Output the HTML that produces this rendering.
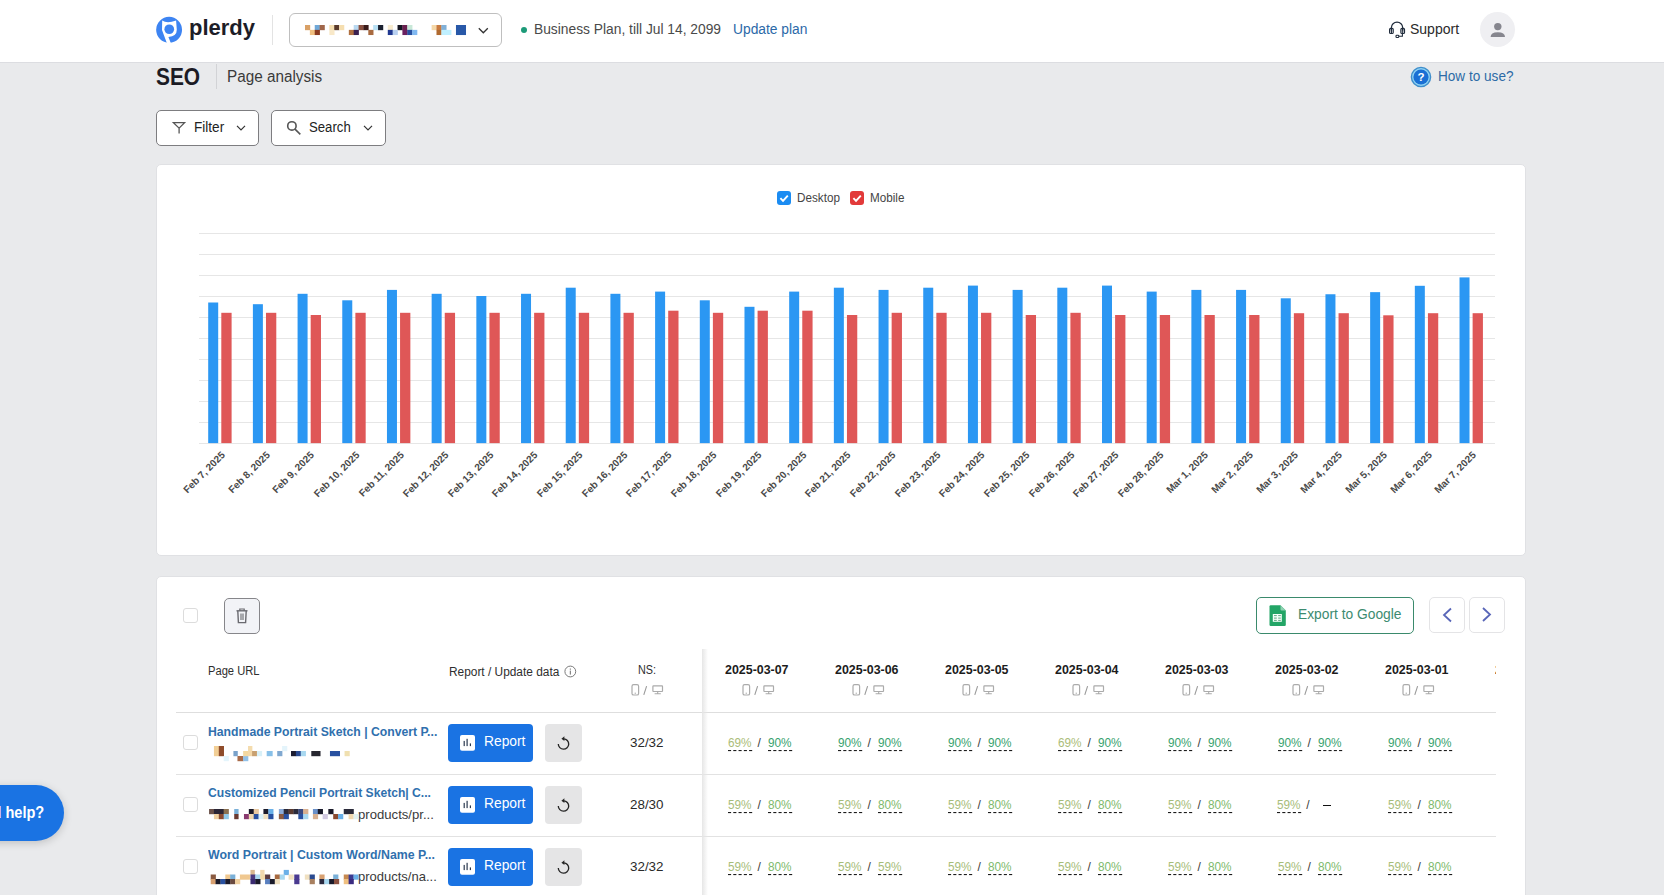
<!DOCTYPE html>
<html><head><meta charset="utf-8"><title>SEO - Page analysis</title>
<style>
html,body{margin:0;padding:0;}
body{width:1664px;height:895px;overflow:hidden;position:relative;background:#e9eaec;font-family:'Liberation Sans', sans-serif;}
.t{position:absolute;white-space:nowrap;}
svg{overflow:visible;}
</style></head><body>
<div style="position:absolute;left:0px;top:0px;width:1664px;height:62px;background:#fff;border-bottom:1px solid #dcdde1;"></div>
<svg style="position:absolute;left:156px;top:17px;" width="26" height="26" viewBox="0 0 26 26"><circle cx="13.1" cy="12.8" r="12.95" fill="#3d84f2"/><path d="M6.2,3.5 Q11,6.8 20.1,3.5 L20.8,12.8 Q20.8,19.5 12.4,20.1 L15.2,27 L11.2,27 L6,13.1 Z" fill="#fff"/><circle cx="13.25" cy="12.25" r="4.85" fill="#3d84f2"/></svg>
<div class="t " style="left:189px;top:17px;font-size:22px;line-height:22px;font-weight:700;color:#1d1d27;">plerdy</div>
<div style="position:absolute;left:272px;top:15px;width:1px;height:30px;background:#e3e3e3;"></div>
<div style="position:absolute;left:289px;top:13px;width:213px;height:34px;box-sizing:border-box;border:1px solid #bfbfbf;border-radius:6px;background:#fff;"></div>
<svg style="position:absolute;left:305px;top:25px;" width="165" height="10" viewBox="0 0 165 10"><rect x="0.00" y="0.00" width="5.17" height="5.17" fill="#d9a066"/><rect x="9.74" y="0.00" width="5.17" height="5.17" fill="#6fa8d8"/><rect x="14.61" y="0.00" width="5.17" height="5.17" fill="#a0664a"/><rect x="24.35" y="0.00" width="5.17" height="5.17" fill="#f5deb0"/><rect x="29.22" y="0.00" width="5.17" height="5.17" fill="#5a3a2a"/><rect x="34.09" y="0.00" width="5.17" height="5.17" fill="#f5deb0"/><rect x="48.70" y="0.00" width="5.17" height="5.17" fill="#b8d8f0"/><rect x="53.57" y="0.00" width="5.17" height="5.17" fill="#8a5040"/><rect x="58.44" y="0.00" width="5.17" height="5.17" fill="#3a1a1a"/><rect x="68.18" y="0.00" width="5.17" height="5.17" fill="#b8e0f4"/><rect x="73.05" y="0.00" width="5.17" height="5.17" fill="#1a2030"/><rect x="82.79" y="0.00" width="5.17" height="5.17" fill="#f8ecd0"/><rect x="92.53" y="0.00" width="5.17" height="5.17" fill="#151522"/><rect x="97.40" y="0.00" width="5.17" height="5.17" fill="#6a2050"/><rect x="102.27" y="0.00" width="5.17" height="5.17" fill="#c8e8d8"/><rect x="126.62" y="0.00" width="5.17" height="5.17" fill="#f5d8a8"/><rect x="131.49" y="0.00" width="5.17" height="5.17" fill="#c87a40"/><rect x="136.36" y="0.00" width="5.17" height="5.17" fill="#80b0d8"/><rect x="150.97" y="0.00" width="10.04" height="10.04" fill="#2858a8"/><rect x="4.87" y="4.87" width="5.17" height="5.17" fill="#f0c080"/><rect x="9.74" y="4.87" width="5.17" height="5.17" fill="#8a3a20"/><rect x="24.35" y="4.87" width="5.17" height="5.17" fill="#f8e8c8"/><rect x="43.83" y="4.87" width="5.17" height="5.17" fill="#b07040"/><rect x="48.70" y="4.87" width="5.17" height="5.17" fill="#3a2050"/><rect x="63.31" y="4.87" width="5.17" height="5.17" fill="#a86a40"/><rect x="82.79" y="4.87" width="5.17" height="5.17" fill="#203890"/><rect x="87.66" y="4.87" width="5.17" height="5.17" fill="#b8d0f0"/><rect x="97.40" y="4.87" width="5.17" height="5.17" fill="#6a2060"/><rect x="102.27" y="4.87" width="5.17" height="5.17" fill="#2850a0"/><rect x="107.14" y="4.87" width="5.17" height="5.17" fill="#80b8f0"/><rect x="131.49" y="4.87" width="5.17" height="5.17" fill="#b06a30"/><rect x="136.36" y="4.87" width="10.04" height="5.17" fill="#c0f0ff"/></svg>
<svg style="position:absolute;left:477px;top:26px;" width="13" height="9" viewBox="0 0 13 9"><polyline points="1.8,2.2 6.3,6.8 10.8,2.2" fill="none" stroke="#333" stroke-width="1.3"/></svg>
<div style="position:absolute;left:521px;top:27px;width:6px;height:6px;border-radius:50%;background:#1c9a78;"></div>
<div class="t " style="left:534px;top:22px;font-size:14px;line-height:14px;font-weight:400;color:#4a4a4a;transform:scaleX(0.9850);transform-origin:left top;">Business Plan, till Jul 14, 2099</div>
<div class="t " style="left:733px;top:22px;font-size:14px;line-height:14px;font-weight:400;color:#2b69a8;transform:scaleX(0.9850);transform-origin:left top;">Update plan</div>
<svg style="position:absolute;left:1388px;top:21px;" width="18" height="18" viewBox="0 0 18 18"><path d="M3.4,9.5 V6.8 A5.65,5.65 0 0 1 14.7,6.8 V9.5" fill="none" stroke="#1f2b3b" stroke-width="1.25"/><rect x="1.6" y="7.3" width="3.6" height="5.2" rx="1.1" fill="none" stroke="#1f2b3b" stroke-width="1.2"/><rect x="12.9" y="7.3" width="3.6" height="5.2" rx="1.1" fill="none" stroke="#1f2b3b" stroke-width="1.2"/><path d="M3.4,7.5 V12.5 M14.7,7.5 V12.5" stroke="#1f2b3b" stroke-width="1.1"/><path d="M14.4,12.6 V15.2 H10.8" fill="none" stroke="#1f2b3b" stroke-width="1.1"/><rect x="8" y="14.3" width="2.8" height="2.2" rx="0.8" fill="none" stroke="#1f2b3b" stroke-width="1.1"/></svg>
<div class="t " style="left:1410px;top:22px;font-size:14px;line-height:14px;font-weight:400;color:#2a2a2a;">Support</div>
<div style="position:absolute;left:1480px;top:12px;width:35px;height:35px;border-radius:50%;background:#efeff2;"></div>
<svg style="position:absolute;left:1480px;top:12px;" width="35" height="35" viewBox="0 0 35 35"><circle cx="17.8" cy="14.6" r="3.7" fill="#86868e"/><path d="M10.6,25 Q10.6,20.2 17.8,20.2 Q25,20.2 25,25 Z" fill="#86868e"/></svg>
<div class="t " style="left:156px;top:65px;font-size:24px;line-height:24px;font-weight:700;color:#1b1b24;transform:scaleX(0.8700);transform-origin:left top;">SEO</div>
<div style="position:absolute;left:216px;top:64px;width:1px;height:25px;background:#d2d3d6;"></div>
<div class="t " style="left:227px;top:69px;font-size:16px;line-height:16px;font-weight:400;color:#3a3a3a;transform:scaleX(0.9550);transform-origin:left top;">Page analysis</div>
<svg style="position:absolute;left:1410px;top:66px;" width="22" height="22" viewBox="0 0 22 22"><circle cx="11" cy="11" r="9.6" fill="#8fd3f4" stroke="#3f8ecb" stroke-width="1.4"/><circle cx="11" cy="11" r="7.6" fill="#1a6fd4"/><text x="11" y="15.2" text-anchor="middle" font-family="Liberation Sans" font-weight="700" font-size="11.5" fill="#fff">?</text></svg>
<div class="t " style="left:1438px;top:69px;font-size:14px;line-height:14px;font-weight:400;color:#2d6aa6;transform:scaleX(0.9700);transform-origin:left top;">How to use?</div>
<div style="position:absolute;left:156px;top:110px;width:103px;height:36px;box-sizing:border-box;border:1px solid #7d7d80;border-radius:5px;background:#fff;"></div>
<svg style="position:absolute;left:172px;top:120px;" width="14" height="15" viewBox="0 0 14 15"><path d="M1.4,2.6 H12.6 L7.1,8.2 Z M7.1,8 V13.6" fill="none" stroke="#555" stroke-width="1.3" stroke-linejoin="miter"/></svg>
<div class="t " style="left:194px;top:120px;font-size:14px;line-height:14px;font-weight:400;color:#222;transform:scaleX(0.9700);transform-origin:left top;">Filter</div>
<svg style="position:absolute;left:235px;top:124px;" width="12" height="8" viewBox="0 0 12 8"><polyline points="2,1.8 6,5.8 10,1.8" fill="none" stroke="#333" stroke-width="1.2"/></svg>
<div style="position:absolute;left:271px;top:110px;width:115px;height:36px;box-sizing:border-box;border:1px solid #7d7d80;border-radius:5px;background:#fff;"></div>
<svg style="position:absolute;left:285px;top:120px;" width="17" height="16" viewBox="0 0 17 16"><circle cx="6.9" cy="5.9" r="4.2" fill="none" stroke="#555" stroke-width="1.6"/><line x1="10" y1="9.2" x2="15.3" y2="14.3" stroke="#555" stroke-width="1.6"/></svg>
<div class="t " style="left:309px;top:120px;font-size:14px;line-height:14px;font-weight:400;color:#222;transform:scaleX(0.9400);transform-origin:left top;">Search</div>
<svg style="position:absolute;left:362px;top:124px;" width="12" height="8" viewBox="0 0 12 8"><polyline points="2,1.8 6,5.8 10,1.8" fill="none" stroke="#333" stroke-width="1.2"/></svg>
<div style="position:absolute;left:156px;top:164px;width:1370px;height:392px;box-sizing:border-box;border:1px solid #e0e1e4;border-radius:5px;background:#fff;"></div>
<div style="position:absolute;left:777px;top:191px;width:14px;height:14px;border-radius:3px;background:#1b8cf2;"></div>
<svg style="position:absolute;left:777px;top:191px;" width="14" height="14" viewBox="0 0 14 14"><polyline points="3.4,7.2 6,9.8 10.8,4.6" fill="none" stroke="#fff" stroke-width="1.9"/></svg>
<div class="t " style="left:797px;top:192px;font-size:12px;line-height:12px;font-weight:400;color:#444;transform:scaleX(0.9750);transform-origin:left top;">Desktop</div>
<div style="position:absolute;left:850px;top:191px;width:14px;height:14px;border-radius:3px;background:#e23a3a;"></div>
<svg style="position:absolute;left:850px;top:191px;" width="14" height="14" viewBox="0 0 14 14"><polyline points="3.4,7.2 6,9.8 10.8,4.6" fill="none" stroke="#fff" stroke-width="1.9"/></svg>
<div class="t " style="left:870px;top:192px;font-size:12px;line-height:12px;font-weight:400;color:#444;transform:scaleX(0.9750);transform-origin:left top;">Mobile</div>
<svg style="position:absolute;left:156px;top:164px;" width="1370" height="392" viewBox="0 0 1370 392"><rect x="43" y="69" width="1296" height="1" fill="#e6e6e6"/><rect x="43" y="90" width="1296" height="1" fill="#e6e6e6"/><rect x="43" y="111" width="1296" height="1" fill="#e6e6e6"/><rect x="43" y="132" width="1296" height="1" fill="#e6e6e6"/><rect x="43" y="153" width="1296" height="1" fill="#e6e6e6"/><rect x="43" y="174" width="1296" height="1" fill="#e6e6e6"/><rect x="43" y="195" width="1296" height="1" fill="#e6e6e6"/><rect x="43" y="216" width="1296" height="1" fill="#e6e6e6"/><rect x="43" y="237" width="1296" height="1" fill="#e6e6e6"/><rect x="43" y="258" width="1296" height="1" fill="#e6e6e6"/><rect x="43" y="279" width="1296" height="1" fill="#e6e6e6"/><rect x="52.20" y="138.50" width="10" height="140.60" fill="#2b97f3"/><rect x="65.30" y="148.80" width="10.3" height="130.30" fill="#df5757"/><rect x="96.89" y="140.20" width="10" height="138.90" fill="#2b97f3"/><rect x="109.99" y="148.80" width="10.3" height="130.30" fill="#df5757"/><rect x="141.58" y="129.80" width="10" height="149.30" fill="#2b97f3"/><rect x="154.68" y="151.00" width="10.3" height="128.10" fill="#df5757"/><rect x="186.27" y="136.30" width="10" height="142.80" fill="#2b97f3"/><rect x="199.37" y="148.80" width="10.3" height="130.30" fill="#df5757"/><rect x="230.96" y="125.90" width="10" height="153.20" fill="#2b97f3"/><rect x="244.06" y="148.80" width="10.3" height="130.30" fill="#df5757"/><rect x="275.65" y="129.80" width="10" height="149.30" fill="#2b97f3"/><rect x="288.75" y="148.80" width="10.3" height="130.30" fill="#df5757"/><rect x="320.34" y="132.00" width="10" height="147.10" fill="#2b97f3"/><rect x="333.44" y="148.80" width="10.3" height="130.30" fill="#df5757"/><rect x="365.03" y="129.80" width="10" height="149.30" fill="#2b97f3"/><rect x="378.13" y="148.80" width="10.3" height="130.30" fill="#df5757"/><rect x="409.72" y="123.70" width="10" height="155.40" fill="#2b97f3"/><rect x="422.82" y="148.80" width="10.3" height="130.30" fill="#df5757"/><rect x="454.41" y="129.80" width="10" height="149.30" fill="#2b97f3"/><rect x="467.51" y="148.80" width="10.3" height="130.30" fill="#df5757"/><rect x="499.10" y="127.60" width="10" height="151.50" fill="#2b97f3"/><rect x="512.20" y="146.70" width="10.3" height="132.40" fill="#df5757"/><rect x="543.79" y="136.30" width="10" height="142.80" fill="#2b97f3"/><rect x="556.89" y="148.80" width="10.3" height="130.30" fill="#df5757"/><rect x="588.48" y="142.80" width="10" height="136.30" fill="#2b97f3"/><rect x="601.58" y="146.70" width="10.3" height="132.40" fill="#df5757"/><rect x="633.17" y="127.60" width="10" height="151.50" fill="#2b97f3"/><rect x="646.27" y="146.70" width="10.3" height="132.40" fill="#df5757"/><rect x="677.86" y="123.70" width="10" height="155.40" fill="#2b97f3"/><rect x="690.96" y="151.00" width="10.3" height="128.10" fill="#df5757"/><rect x="722.55" y="125.90" width="10" height="153.20" fill="#2b97f3"/><rect x="735.65" y="148.80" width="10.3" height="130.30" fill="#df5757"/><rect x="767.24" y="123.70" width="10" height="155.40" fill="#2b97f3"/><rect x="780.34" y="148.80" width="10.3" height="130.30" fill="#df5757"/><rect x="811.93" y="121.60" width="10" height="157.50" fill="#2b97f3"/><rect x="825.03" y="148.80" width="10.3" height="130.30" fill="#df5757"/><rect x="856.62" y="125.90" width="10" height="153.20" fill="#2b97f3"/><rect x="869.72" y="151.00" width="10.3" height="128.10" fill="#df5757"/><rect x="901.31" y="123.70" width="10" height="155.40" fill="#2b97f3"/><rect x="914.41" y="148.80" width="10.3" height="130.30" fill="#df5757"/><rect x="946.00" y="121.60" width="10" height="157.50" fill="#2b97f3"/><rect x="959.10" y="151.00" width="10.3" height="128.10" fill="#df5757"/><rect x="990.69" y="127.60" width="10" height="151.50" fill="#2b97f3"/><rect x="1003.79" y="151.00" width="10.3" height="128.10" fill="#df5757"/><rect x="1035.38" y="125.90" width="10" height="153.20" fill="#2b97f3"/><rect x="1048.48" y="151.00" width="10.3" height="128.10" fill="#df5757"/><rect x="1080.07" y="125.90" width="10" height="153.20" fill="#2b97f3"/><rect x="1093.17" y="151.00" width="10.3" height="128.10" fill="#df5757"/><rect x="1124.76" y="134.30" width="10" height="144.80" fill="#2b97f3"/><rect x="1137.86" y="149.20" width="10.3" height="129.90" fill="#df5757"/><rect x="1169.45" y="130.25" width="10" height="148.85" fill="#2b97f3"/><rect x="1182.55" y="149.20" width="10.3" height="129.90" fill="#df5757"/><rect x="1214.14" y="128.15" width="10" height="150.95" fill="#2b97f3"/><rect x="1227.24" y="151.30" width="10.3" height="127.80" fill="#df5757"/><rect x="1258.83" y="121.80" width="10" height="157.30" fill="#2b97f3"/><rect x="1271.93" y="149.20" width="10.3" height="129.90" fill="#df5757"/><rect x="1303.52" y="113.40" width="10" height="165.70" fill="#2b97f3"/><rect x="1316.62" y="149.20" width="10.3" height="129.90" fill="#df5757"/></svg>
<div class="t" style="right:1444.00px;top:450px;font-size:10px;line-height:10px;font-weight:700;color:#4a4a4a;transform:rotate(-45deg);transform-origin:right top;">Feb 7, 2025</div>
<div class="t" style="right:1399.31px;top:450px;font-size:10px;line-height:10px;font-weight:700;color:#4a4a4a;transform:rotate(-45deg);transform-origin:right top;">Feb 8, 2025</div>
<div class="t" style="right:1354.62px;top:450px;font-size:10px;line-height:10px;font-weight:700;color:#4a4a4a;transform:rotate(-45deg);transform-origin:right top;">Feb 9, 2025</div>
<div class="t" style="right:1309.93px;top:450px;font-size:10px;line-height:10px;font-weight:700;color:#4a4a4a;transform:rotate(-45deg);transform-origin:right top;">Feb 10, 2025</div>
<div class="t" style="right:1265.24px;top:450px;font-size:10px;line-height:10px;font-weight:700;color:#4a4a4a;transform:rotate(-45deg);transform-origin:right top;">Feb 11, 2025</div>
<div class="t" style="right:1220.55px;top:450px;font-size:10px;line-height:10px;font-weight:700;color:#4a4a4a;transform:rotate(-45deg);transform-origin:right top;">Feb 12, 2025</div>
<div class="t" style="right:1175.86px;top:450px;font-size:10px;line-height:10px;font-weight:700;color:#4a4a4a;transform:rotate(-45deg);transform-origin:right top;">Feb 13, 2025</div>
<div class="t" style="right:1131.17px;top:450px;font-size:10px;line-height:10px;font-weight:700;color:#4a4a4a;transform:rotate(-45deg);transform-origin:right top;">Feb 14, 2025</div>
<div class="t" style="right:1086.48px;top:450px;font-size:10px;line-height:10px;font-weight:700;color:#4a4a4a;transform:rotate(-45deg);transform-origin:right top;">Feb 15, 2025</div>
<div class="t" style="right:1041.79px;top:450px;font-size:10px;line-height:10px;font-weight:700;color:#4a4a4a;transform:rotate(-45deg);transform-origin:right top;">Feb 16, 2025</div>
<div class="t" style="right:997.10px;top:450px;font-size:10px;line-height:10px;font-weight:700;color:#4a4a4a;transform:rotate(-45deg);transform-origin:right top;">Feb 17, 2025</div>
<div class="t" style="right:952.41px;top:450px;font-size:10px;line-height:10px;font-weight:700;color:#4a4a4a;transform:rotate(-45deg);transform-origin:right top;">Feb 18, 2025</div>
<div class="t" style="right:907.72px;top:450px;font-size:10px;line-height:10px;font-weight:700;color:#4a4a4a;transform:rotate(-45deg);transform-origin:right top;">Feb 19, 2025</div>
<div class="t" style="right:863.03px;top:450px;font-size:10px;line-height:10px;font-weight:700;color:#4a4a4a;transform:rotate(-45deg);transform-origin:right top;">Feb 20, 2025</div>
<div class="t" style="right:818.34px;top:450px;font-size:10px;line-height:10px;font-weight:700;color:#4a4a4a;transform:rotate(-45deg);transform-origin:right top;">Feb 21, 2025</div>
<div class="t" style="right:773.65px;top:450px;font-size:10px;line-height:10px;font-weight:700;color:#4a4a4a;transform:rotate(-45deg);transform-origin:right top;">Feb 22, 2025</div>
<div class="t" style="right:728.96px;top:450px;font-size:10px;line-height:10px;font-weight:700;color:#4a4a4a;transform:rotate(-45deg);transform-origin:right top;">Feb 23, 2025</div>
<div class="t" style="right:684.27px;top:450px;font-size:10px;line-height:10px;font-weight:700;color:#4a4a4a;transform:rotate(-45deg);transform-origin:right top;">Feb 24, 2025</div>
<div class="t" style="right:639.58px;top:450px;font-size:10px;line-height:10px;font-weight:700;color:#4a4a4a;transform:rotate(-45deg);transform-origin:right top;">Feb 25, 2025</div>
<div class="t" style="right:594.89px;top:450px;font-size:10px;line-height:10px;font-weight:700;color:#4a4a4a;transform:rotate(-45deg);transform-origin:right top;">Feb 26, 2025</div>
<div class="t" style="right:550.20px;top:450px;font-size:10px;line-height:10px;font-weight:700;color:#4a4a4a;transform:rotate(-45deg);transform-origin:right top;">Feb 27, 2025</div>
<div class="t" style="right:505.51px;top:450px;font-size:10px;line-height:10px;font-weight:700;color:#4a4a4a;transform:rotate(-45deg);transform-origin:right top;">Feb 28, 2025</div>
<div class="t" style="right:460.82px;top:450px;font-size:10px;line-height:10px;font-weight:700;color:#4a4a4a;transform:rotate(-45deg);transform-origin:right top;">Mar 1, 2025</div>
<div class="t" style="right:416.13px;top:450px;font-size:10px;line-height:10px;font-weight:700;color:#4a4a4a;transform:rotate(-45deg);transform-origin:right top;">Mar 2, 2025</div>
<div class="t" style="right:371.44px;top:450px;font-size:10px;line-height:10px;font-weight:700;color:#4a4a4a;transform:rotate(-45deg);transform-origin:right top;">Mar 3, 2025</div>
<div class="t" style="right:326.75px;top:450px;font-size:10px;line-height:10px;font-weight:700;color:#4a4a4a;transform:rotate(-45deg);transform-origin:right top;">Mar 4, 2025</div>
<div class="t" style="right:282.06px;top:450px;font-size:10px;line-height:10px;font-weight:700;color:#4a4a4a;transform:rotate(-45deg);transform-origin:right top;">Mar 5, 2025</div>
<div class="t" style="right:237.37px;top:450px;font-size:10px;line-height:10px;font-weight:700;color:#4a4a4a;transform:rotate(-45deg);transform-origin:right top;">Mar 6, 2025</div>
<div class="t" style="right:192.68px;top:450px;font-size:10px;line-height:10px;font-weight:700;color:#4a4a4a;transform:rotate(-45deg);transform-origin:right top;">Mar 7, 2025</div>
<div style="position:absolute;left:156px;top:576px;width:1370px;height:340px;box-sizing:border-box;border:1px solid #e0e1e4;border-radius:5px;background:#fff;"></div>
<div style="position:absolute;left:183px;top:608px;width:15px;height:15px;box-sizing:border-box;border:1.5px solid #dcdcdc;border-radius:3px;background:#fff;"></div>
<div style="position:absolute;left:224px;top:598px;width:36px;height:36px;box-sizing:border-box;border:1px solid #86868a;border-radius:5px;background:#f2f3f7;"></div>
<svg style="position:absolute;left:235px;top:608px;" width="14" height="16" viewBox="0 0 14 16"><path d="M1.5,2.8 H12.5" stroke="#6a6a70" stroke-width="1.4"/><path d="M4.8,2.8 V1 H9.2 V2.8" fill="none" stroke="#6a6a70" stroke-width="1.2"/><path d="M2.8,3 L3.4,14.6 H10.6 L11.2,3" fill="none" stroke="#6a6a70" stroke-width="1.4"/><path d="M6,5.5 V12 M8,5.5 V12" stroke="#6a6a70" stroke-width="1.1"/></svg>
<div style="position:absolute;left:1256px;top:597px;width:158px;height:37px;box-sizing:border-box;border:1px solid #3a8a6c;border-radius:5px;background:#fff;"></div>
<svg style="position:absolute;left:1269px;top:605px;" width="18" height="22" viewBox="0 0 18 22"><path d="M0.5,1.5 Q0.5,0.3 1.7,0.3 H11.5 L16.8,5.6 V19.8 Q16.8,21 15.6,21 H1.7 Q0.5,21 0.5,19.8 Z" fill="#23a566"/><path d="M11.5,0.3 L16.8,5.6 H12.6 Q11.5,5.6 11.5,4.5 Z" fill="#8ed1b1"/><rect x="3.8" y="9" width="9" height="7.8" fill="#f4fff8"/><path d="M5,10.6 H7.8 M9.2,10.6 H11.8 M5,13.1 H7.8 M9.2,13.1 H11.8 M5,15.4 H7.8 M9.2,15.4 H11.8" stroke="#1e7a4e" stroke-width="0.9" opacity="0.75"/></svg>
<div class="t " style="left:1298px;top:607px;font-size:14px;line-height:14px;font-weight:400;color:#3c8b70;transform:scaleX(0.9850);transform-origin:left top;">Export to Google</div>
<div style="position:absolute;left:1429px;top:597px;width:36px;height:36px;box-sizing:border-box;border:1px solid #e4e4e6;border-radius:5px;background:#fff;"></div>
<svg style="position:absolute;left:1441px;top:607px;" width="12" height="17" viewBox="0 0 12 17"><polyline points="10,1.5 3,8 10,14.5" fill="none" stroke="#5966b8" stroke-width="1.8"/></svg>
<div style="position:absolute;left:1469px;top:597px;width:36px;height:36px;box-sizing:border-box;border:1px solid #e4e4e6;border-radius:5px;background:#fff;"></div>
<svg style="position:absolute;left:1481px;top:607px;" width="12" height="17" viewBox="0 0 12 17"><polyline points="2,1 9,7.5 2,14" fill="none" stroke="#5966b8" stroke-width="1.8"/></svg>
<div class="t " style="left:208px;top:665px;font-size:12px;line-height:12px;font-weight:400;color:#2e2e2e;transform:scaleX(0.9300);transform-origin:left top;">Page URL</div>
<div class="t " style="left:449px;top:666px;font-size:12px;line-height:12px;font-weight:400;color:#2e2e2e;transform:scaleX(0.9900);transform-origin:left top;">Report / Update data</div>
<svg style="position:absolute;left:564px;top:665px;" width="13" height="13" viewBox="0 0 13 13"><circle cx="6.3" cy="6.5" r="5.4" fill="none" stroke="#7a7a7a" stroke-width="1"/><rect x="5.8" y="5.6" width="1.1" height="4" fill="#7a7a7a"/><rect x="5.8" y="3.5" width="1.1" height="1.2" fill="#7a7a7a"/></svg>
<div class="t " style="left:638px;top:664px;font-size:12px;line-height:12px;font-weight:400;color:#2e2e2e;transform:scaleX(0.9000);transform-origin:left top;">NS:</div>
<svg style="position:absolute;left:631px;top:683.5px;" width="34" height="12" viewBox="0 0 34 12"><rect x="1" y="0.6" width="6.6" height="10.4" rx="1.6" fill="none" stroke="#ababab" stroke-width="1.2"/><rect x="3.6" y="8.7" width="1.4" height="1" fill="#ababab"/><path d="M15.6,2.2 L12.8,10.8" stroke="#9a9a9a" stroke-width="1.1"/><rect x="21.9" y="1.9" width="9.6" height="5.6" rx="0.5" fill="none" stroke="#ababab" stroke-width="1.2"/><path d="M26.7,7.6 V9.4 M23.6,9.8 H29.8" stroke="#ababab" stroke-width="1.1"/></svg>
<div style="position:absolute;left:0;top:0;width:1496px;height:895px;overflow:hidden">
<div class="t " style="left:725px;top:664px;font-size:12px;line-height:12px;font-weight:700;color:#1c1c1c;transform:scaleX(1.0350);transform-origin:left top;">2025-03-07</div>
<svg style="position:absolute;left:742px;top:683.5px;" width="34" height="12" viewBox="0 0 34 12"><rect x="1" y="0.6" width="6.6" height="10.4" rx="1.6" fill="none" stroke="#ababab" stroke-width="1.2"/><rect x="3.6" y="8.7" width="1.4" height="1" fill="#ababab"/><path d="M15.6,2.2 L12.8,10.8" stroke="#9a9a9a" stroke-width="1.1"/><rect x="21.9" y="1.9" width="9.6" height="5.6" rx="0.5" fill="none" stroke="#ababab" stroke-width="1.2"/><path d="M26.7,7.6 V9.4 M23.6,9.8 H29.8" stroke="#ababab" stroke-width="1.1"/></svg>
<div class="t " style="left:835px;top:664px;font-size:12px;line-height:12px;font-weight:700;color:#1c1c1c;transform:scaleX(1.0350);transform-origin:left top;">2025-03-06</div>
<svg style="position:absolute;left:852px;top:683.5px;" width="34" height="12" viewBox="0 0 34 12"><rect x="1" y="0.6" width="6.6" height="10.4" rx="1.6" fill="none" stroke="#ababab" stroke-width="1.2"/><rect x="3.6" y="8.7" width="1.4" height="1" fill="#ababab"/><path d="M15.6,2.2 L12.8,10.8" stroke="#9a9a9a" stroke-width="1.1"/><rect x="21.9" y="1.9" width="9.6" height="5.6" rx="0.5" fill="none" stroke="#ababab" stroke-width="1.2"/><path d="M26.7,7.6 V9.4 M23.6,9.8 H29.8" stroke="#ababab" stroke-width="1.1"/></svg>
<div class="t " style="left:945px;top:664px;font-size:12px;line-height:12px;font-weight:700;color:#1c1c1c;transform:scaleX(1.0350);transform-origin:left top;">2025-03-05</div>
<svg style="position:absolute;left:962px;top:683.5px;" width="34" height="12" viewBox="0 0 34 12"><rect x="1" y="0.6" width="6.6" height="10.4" rx="1.6" fill="none" stroke="#ababab" stroke-width="1.2"/><rect x="3.6" y="8.7" width="1.4" height="1" fill="#ababab"/><path d="M15.6,2.2 L12.8,10.8" stroke="#9a9a9a" stroke-width="1.1"/><rect x="21.9" y="1.9" width="9.6" height="5.6" rx="0.5" fill="none" stroke="#ababab" stroke-width="1.2"/><path d="M26.7,7.6 V9.4 M23.6,9.8 H29.8" stroke="#ababab" stroke-width="1.1"/></svg>
<div class="t " style="left:1055px;top:664px;font-size:12px;line-height:12px;font-weight:700;color:#1c1c1c;transform:scaleX(1.0350);transform-origin:left top;">2025-03-04</div>
<svg style="position:absolute;left:1072px;top:683.5px;" width="34" height="12" viewBox="0 0 34 12"><rect x="1" y="0.6" width="6.6" height="10.4" rx="1.6" fill="none" stroke="#ababab" stroke-width="1.2"/><rect x="3.6" y="8.7" width="1.4" height="1" fill="#ababab"/><path d="M15.6,2.2 L12.8,10.8" stroke="#9a9a9a" stroke-width="1.1"/><rect x="21.9" y="1.9" width="9.6" height="5.6" rx="0.5" fill="none" stroke="#ababab" stroke-width="1.2"/><path d="M26.7,7.6 V9.4 M23.6,9.8 H29.8" stroke="#ababab" stroke-width="1.1"/></svg>
<div class="t " style="left:1165px;top:664px;font-size:12px;line-height:12px;font-weight:700;color:#1c1c1c;transform:scaleX(1.0350);transform-origin:left top;">2025-03-03</div>
<svg style="position:absolute;left:1182px;top:683.5px;" width="34" height="12" viewBox="0 0 34 12"><rect x="1" y="0.6" width="6.6" height="10.4" rx="1.6" fill="none" stroke="#ababab" stroke-width="1.2"/><rect x="3.6" y="8.7" width="1.4" height="1" fill="#ababab"/><path d="M15.6,2.2 L12.8,10.8" stroke="#9a9a9a" stroke-width="1.1"/><rect x="21.9" y="1.9" width="9.6" height="5.6" rx="0.5" fill="none" stroke="#ababab" stroke-width="1.2"/><path d="M26.7,7.6 V9.4 M23.6,9.8 H29.8" stroke="#ababab" stroke-width="1.1"/></svg>
<div class="t " style="left:1275px;top:664px;font-size:12px;line-height:12px;font-weight:700;color:#1c1c1c;transform:scaleX(1.0350);transform-origin:left top;">2025-03-02</div>
<svg style="position:absolute;left:1292px;top:683.5px;" width="34" height="12" viewBox="0 0 34 12"><rect x="1" y="0.6" width="6.6" height="10.4" rx="1.6" fill="none" stroke="#ababab" stroke-width="1.2"/><rect x="3.6" y="8.7" width="1.4" height="1" fill="#ababab"/><path d="M15.6,2.2 L12.8,10.8" stroke="#9a9a9a" stroke-width="1.1"/><rect x="21.9" y="1.9" width="9.6" height="5.6" rx="0.5" fill="none" stroke="#ababab" stroke-width="1.2"/><path d="M26.7,7.6 V9.4 M23.6,9.8 H29.8" stroke="#ababab" stroke-width="1.1"/></svg>
<div class="t " style="left:1385px;top:664px;font-size:12px;line-height:12px;font-weight:700;color:#1c1c1c;transform:scaleX(1.0350);transform-origin:left top;">2025-03-01</div>
<svg style="position:absolute;left:1402px;top:683.5px;" width="34" height="12" viewBox="0 0 34 12"><rect x="1" y="0.6" width="6.6" height="10.4" rx="1.6" fill="none" stroke="#ababab" stroke-width="1.2"/><rect x="3.6" y="8.7" width="1.4" height="1" fill="#ababab"/><path d="M15.6,2.2 L12.8,10.8" stroke="#9a9a9a" stroke-width="1.1"/><rect x="21.9" y="1.9" width="9.6" height="5.6" rx="0.5" fill="none" stroke="#ababab" stroke-width="1.2"/><path d="M26.7,7.6 V9.4 M23.6,9.8 H29.8" stroke="#ababab" stroke-width="1.1"/></svg>
<div class="t " style="left:1495px;top:664px;font-size:12px;line-height:12px;font-weight:700;color:#1c1c1c;transform:scaleX(1.0350);transform-origin:left top;">2025-02-28</div>
<svg style="position:absolute;left:1512px;top:683.5px;" width="34" height="12" viewBox="0 0 34 12"><rect x="1" y="0.6" width="6.6" height="10.4" rx="1.6" fill="none" stroke="#ababab" stroke-width="1.2"/><rect x="3.6" y="8.7" width="1.4" height="1" fill="#ababab"/><path d="M15.6,2.2 L12.8,10.8" stroke="#9a9a9a" stroke-width="1.1"/><rect x="21.9" y="1.9" width="9.6" height="5.6" rx="0.5" fill="none" stroke="#ababab" stroke-width="1.2"/><path d="M26.7,7.6 V9.4 M23.6,9.8 H29.8" stroke="#ababab" stroke-width="1.1"/></svg>
<div style="position:absolute;left:183px;top:735px;width:15px;height:15px;box-sizing:border-box;border:1.5px solid #dcdcdc;border-radius:3px;background:#fff;"></div>
<div class="t " style="left:208px;top:725px;font-size:13px;line-height:13px;font-weight:700;color:#3070ae;transform:scaleX(0.9398);transform-origin:left top;">Handmade Portrait Sketch | Convert P...</div>
<div style="position:absolute;left:448px;top:724px;width:85px;height:38px;border-radius:4px;background:#1a73e3;"></div>
<svg style="position:absolute;left:459px;top:735px;" width="17" height="17" viewBox="0 0 17 17"><rect x="1" y="0" width="15" height="15.8" rx="2" fill="#fff"/><rect x="4.6" y="5.9" width="1.2" height="5.2" fill="#2c3a50"/><rect x="7.5" y="3.8" width="1.2" height="7.3" fill="#2c3a50"/><rect x="10.8" y="8.4" width="1.2" height="2.7" fill="#2c3a50"/></svg>
<div class="t " style="left:484px;top:734px;font-size:14px;line-height:14px;font-weight:400;color:#ffffff;transform:scaleX(0.9850);transform-origin:left top;">Report</div>
<div style="position:absolute;left:545px;top:724px;width:37px;height:38px;border-radius:4px;background:#e5e5e6;"></div>
<svg style="position:absolute;left:556px;top:735px;" width="15" height="16" viewBox="0 0 15 16"><path d="M2.3,9 A5.2,5.2 0 1 0 7.8,3.8" fill="none" stroke="#262626" stroke-width="1.35"/><path d="M5.4,3.7 L8.4,1.3 L8.4,6.1 Z" fill="#262626"/></svg>
<div class="t " style="left:630px;top:736px;font-size:13px;line-height:13px;font-weight:400;color:#2a2a2a;transform:scaleX(1.0300);transform-origin:left top;">32/32</div>
<div class="t " style="left:728px;top:737px;font-size:12px;line-height:12px;font-weight:400;color:#abbd78;transform:scaleX(0.9800);transform-origin:left top;">69%</div>
<svg style="position:absolute;left:728px;top:750px;" width="25" height="1" viewBox="0 0 25 1"><rect x="0.00" y="0" width="3.1" height="1.1" fill="#1c1c1c"/><rect x="5.27" y="0" width="3.1" height="1.1" fill="#1c1c1c"/><rect x="10.54" y="0" width="3.1" height="1.1" fill="#1c1c1c"/><rect x="15.81" y="0" width="3.1" height="1.1" fill="#1c1c1c"/><rect x="21.08" y="0" width="3.1" height="1.1" fill="#1c1c1c"/></svg>
<div class="t " style="left:757.5px;top:737px;font-size:12px;line-height:12px;font-weight:400;color:#3a3a3a;">/</div>
<div class="t " style="left:767.7px;top:737px;font-size:12px;line-height:12px;font-weight:400;color:#37a26e;transform:scaleX(0.9800);transform-origin:left top;">90%</div>
<svg style="position:absolute;left:767.7px;top:750px;" width="25" height="1" viewBox="0 0 25 1"><rect x="0.00" y="0" width="3.1" height="1.1" fill="#1c1c1c"/><rect x="5.27" y="0" width="3.1" height="1.1" fill="#1c1c1c"/><rect x="10.54" y="0" width="3.1" height="1.1" fill="#1c1c1c"/><rect x="15.81" y="0" width="3.1" height="1.1" fill="#1c1c1c"/><rect x="21.08" y="0" width="3.1" height="1.1" fill="#1c1c1c"/></svg>
<div class="t " style="left:838px;top:737px;font-size:12px;line-height:12px;font-weight:400;color:#37a26e;transform:scaleX(0.9800);transform-origin:left top;">90%</div>
<svg style="position:absolute;left:838px;top:750px;" width="25" height="1" viewBox="0 0 25 1"><rect x="0.00" y="0" width="3.1" height="1.1" fill="#1c1c1c"/><rect x="5.27" y="0" width="3.1" height="1.1" fill="#1c1c1c"/><rect x="10.54" y="0" width="3.1" height="1.1" fill="#1c1c1c"/><rect x="15.81" y="0" width="3.1" height="1.1" fill="#1c1c1c"/><rect x="21.08" y="0" width="3.1" height="1.1" fill="#1c1c1c"/></svg>
<div class="t " style="left:867.5px;top:737px;font-size:12px;line-height:12px;font-weight:400;color:#3a3a3a;">/</div>
<div class="t " style="left:877.7px;top:737px;font-size:12px;line-height:12px;font-weight:400;color:#37a26e;transform:scaleX(0.9800);transform-origin:left top;">90%</div>
<svg style="position:absolute;left:877.7px;top:750px;" width="25" height="1" viewBox="0 0 25 1"><rect x="0.00" y="0" width="3.1" height="1.1" fill="#1c1c1c"/><rect x="5.27" y="0" width="3.1" height="1.1" fill="#1c1c1c"/><rect x="10.54" y="0" width="3.1" height="1.1" fill="#1c1c1c"/><rect x="15.81" y="0" width="3.1" height="1.1" fill="#1c1c1c"/><rect x="21.08" y="0" width="3.1" height="1.1" fill="#1c1c1c"/></svg>
<div class="t " style="left:948px;top:737px;font-size:12px;line-height:12px;font-weight:400;color:#37a26e;transform:scaleX(0.9800);transform-origin:left top;">90%</div>
<svg style="position:absolute;left:948px;top:750px;" width="25" height="1" viewBox="0 0 25 1"><rect x="0.00" y="0" width="3.1" height="1.1" fill="#1c1c1c"/><rect x="5.27" y="0" width="3.1" height="1.1" fill="#1c1c1c"/><rect x="10.54" y="0" width="3.1" height="1.1" fill="#1c1c1c"/><rect x="15.81" y="0" width="3.1" height="1.1" fill="#1c1c1c"/><rect x="21.08" y="0" width="3.1" height="1.1" fill="#1c1c1c"/></svg>
<div class="t " style="left:977.5px;top:737px;font-size:12px;line-height:12px;font-weight:400;color:#3a3a3a;">/</div>
<div class="t " style="left:987.7px;top:737px;font-size:12px;line-height:12px;font-weight:400;color:#37a26e;transform:scaleX(0.9800);transform-origin:left top;">90%</div>
<svg style="position:absolute;left:987.7px;top:750px;" width="25" height="1" viewBox="0 0 25 1"><rect x="0.00" y="0" width="3.1" height="1.1" fill="#1c1c1c"/><rect x="5.27" y="0" width="3.1" height="1.1" fill="#1c1c1c"/><rect x="10.54" y="0" width="3.1" height="1.1" fill="#1c1c1c"/><rect x="15.81" y="0" width="3.1" height="1.1" fill="#1c1c1c"/><rect x="21.08" y="0" width="3.1" height="1.1" fill="#1c1c1c"/></svg>
<div class="t " style="left:1058px;top:737px;font-size:12px;line-height:12px;font-weight:400;color:#abbd78;transform:scaleX(0.9800);transform-origin:left top;">69%</div>
<svg style="position:absolute;left:1058px;top:750px;" width="25" height="1" viewBox="0 0 25 1"><rect x="0.00" y="0" width="3.1" height="1.1" fill="#1c1c1c"/><rect x="5.27" y="0" width="3.1" height="1.1" fill="#1c1c1c"/><rect x="10.54" y="0" width="3.1" height="1.1" fill="#1c1c1c"/><rect x="15.81" y="0" width="3.1" height="1.1" fill="#1c1c1c"/><rect x="21.08" y="0" width="3.1" height="1.1" fill="#1c1c1c"/></svg>
<div class="t " style="left:1087.5px;top:737px;font-size:12px;line-height:12px;font-weight:400;color:#3a3a3a;">/</div>
<div class="t " style="left:1097.7px;top:737px;font-size:12px;line-height:12px;font-weight:400;color:#37a26e;transform:scaleX(0.9800);transform-origin:left top;">90%</div>
<svg style="position:absolute;left:1097.7px;top:750px;" width="25" height="1" viewBox="0 0 25 1"><rect x="0.00" y="0" width="3.1" height="1.1" fill="#1c1c1c"/><rect x="5.27" y="0" width="3.1" height="1.1" fill="#1c1c1c"/><rect x="10.54" y="0" width="3.1" height="1.1" fill="#1c1c1c"/><rect x="15.81" y="0" width="3.1" height="1.1" fill="#1c1c1c"/><rect x="21.08" y="0" width="3.1" height="1.1" fill="#1c1c1c"/></svg>
<div class="t " style="left:1168px;top:737px;font-size:12px;line-height:12px;font-weight:400;color:#37a26e;transform:scaleX(0.9800);transform-origin:left top;">90%</div>
<svg style="position:absolute;left:1168px;top:750px;" width="25" height="1" viewBox="0 0 25 1"><rect x="0.00" y="0" width="3.1" height="1.1" fill="#1c1c1c"/><rect x="5.27" y="0" width="3.1" height="1.1" fill="#1c1c1c"/><rect x="10.54" y="0" width="3.1" height="1.1" fill="#1c1c1c"/><rect x="15.81" y="0" width="3.1" height="1.1" fill="#1c1c1c"/><rect x="21.08" y="0" width="3.1" height="1.1" fill="#1c1c1c"/></svg>
<div class="t " style="left:1197.5px;top:737px;font-size:12px;line-height:12px;font-weight:400;color:#3a3a3a;">/</div>
<div class="t " style="left:1207.7px;top:737px;font-size:12px;line-height:12px;font-weight:400;color:#37a26e;transform:scaleX(0.9800);transform-origin:left top;">90%</div>
<svg style="position:absolute;left:1207.7px;top:750px;" width="25" height="1" viewBox="0 0 25 1"><rect x="0.00" y="0" width="3.1" height="1.1" fill="#1c1c1c"/><rect x="5.27" y="0" width="3.1" height="1.1" fill="#1c1c1c"/><rect x="10.54" y="0" width="3.1" height="1.1" fill="#1c1c1c"/><rect x="15.81" y="0" width="3.1" height="1.1" fill="#1c1c1c"/><rect x="21.08" y="0" width="3.1" height="1.1" fill="#1c1c1c"/></svg>
<div class="t " style="left:1278px;top:737px;font-size:12px;line-height:12px;font-weight:400;color:#37a26e;transform:scaleX(0.9800);transform-origin:left top;">90%</div>
<svg style="position:absolute;left:1278px;top:750px;" width="25" height="1" viewBox="0 0 25 1"><rect x="0.00" y="0" width="3.1" height="1.1" fill="#1c1c1c"/><rect x="5.27" y="0" width="3.1" height="1.1" fill="#1c1c1c"/><rect x="10.54" y="0" width="3.1" height="1.1" fill="#1c1c1c"/><rect x="15.81" y="0" width="3.1" height="1.1" fill="#1c1c1c"/><rect x="21.08" y="0" width="3.1" height="1.1" fill="#1c1c1c"/></svg>
<div class="t " style="left:1307.5px;top:737px;font-size:12px;line-height:12px;font-weight:400;color:#3a3a3a;">/</div>
<div class="t " style="left:1317.7px;top:737px;font-size:12px;line-height:12px;font-weight:400;color:#37a26e;transform:scaleX(0.9800);transform-origin:left top;">90%</div>
<svg style="position:absolute;left:1317.7px;top:750px;" width="25" height="1" viewBox="0 0 25 1"><rect x="0.00" y="0" width="3.1" height="1.1" fill="#1c1c1c"/><rect x="5.27" y="0" width="3.1" height="1.1" fill="#1c1c1c"/><rect x="10.54" y="0" width="3.1" height="1.1" fill="#1c1c1c"/><rect x="15.81" y="0" width="3.1" height="1.1" fill="#1c1c1c"/><rect x="21.08" y="0" width="3.1" height="1.1" fill="#1c1c1c"/></svg>
<div class="t " style="left:1388px;top:737px;font-size:12px;line-height:12px;font-weight:400;color:#37a26e;transform:scaleX(0.9800);transform-origin:left top;">90%</div>
<svg style="position:absolute;left:1388px;top:750px;" width="25" height="1" viewBox="0 0 25 1"><rect x="0.00" y="0" width="3.1" height="1.1" fill="#1c1c1c"/><rect x="5.27" y="0" width="3.1" height="1.1" fill="#1c1c1c"/><rect x="10.54" y="0" width="3.1" height="1.1" fill="#1c1c1c"/><rect x="15.81" y="0" width="3.1" height="1.1" fill="#1c1c1c"/><rect x="21.08" y="0" width="3.1" height="1.1" fill="#1c1c1c"/></svg>
<div class="t " style="left:1417.5px;top:737px;font-size:12px;line-height:12px;font-weight:400;color:#3a3a3a;">/</div>
<div class="t " style="left:1427.7px;top:737px;font-size:12px;line-height:12px;font-weight:400;color:#37a26e;transform:scaleX(0.9800);transform-origin:left top;">90%</div>
<svg style="position:absolute;left:1427.7px;top:750px;" width="25" height="1" viewBox="0 0 25 1"><rect x="0.00" y="0" width="3.1" height="1.1" fill="#1c1c1c"/><rect x="5.27" y="0" width="3.1" height="1.1" fill="#1c1c1c"/><rect x="10.54" y="0" width="3.1" height="1.1" fill="#1c1c1c"/><rect x="15.81" y="0" width="3.1" height="1.1" fill="#1c1c1c"/><rect x="21.08" y="0" width="3.1" height="1.1" fill="#1c1c1c"/></svg>
<div class="t " style="left:1498px;top:737px;font-size:12px;line-height:12px;font-weight:400;color:#37a26e;transform:scaleX(0.9800);transform-origin:left top;">90%</div>
<svg style="position:absolute;left:1498px;top:750px;" width="25" height="1" viewBox="0 0 25 1"><rect x="0.00" y="0" width="3.1" height="1.1" fill="#1c1c1c"/><rect x="5.27" y="0" width="3.1" height="1.1" fill="#1c1c1c"/><rect x="10.54" y="0" width="3.1" height="1.1" fill="#1c1c1c"/><rect x="15.81" y="0" width="3.1" height="1.1" fill="#1c1c1c"/><rect x="21.08" y="0" width="3.1" height="1.1" fill="#1c1c1c"/></svg>
<div class="t " style="left:1527.5px;top:737px;font-size:12px;line-height:12px;font-weight:400;color:#3a3a3a;">/</div>
<div class="t " style="left:1537.7px;top:737px;font-size:12px;line-height:12px;font-weight:400;color:#37a26e;transform:scaleX(0.9800);transform-origin:left top;">90%</div>
<svg style="position:absolute;left:1537.7px;top:750px;" width="25" height="1" viewBox="0 0 25 1"><rect x="0.00" y="0" width="3.1" height="1.1" fill="#1c1c1c"/><rect x="5.27" y="0" width="3.1" height="1.1" fill="#1c1c1c"/><rect x="10.54" y="0" width="3.1" height="1.1" fill="#1c1c1c"/><rect x="15.81" y="0" width="3.1" height="1.1" fill="#1c1c1c"/><rect x="21.08" y="0" width="3.1" height="1.1" fill="#1c1c1c"/></svg>
<div style="position:absolute;left:183px;top:797px;width:15px;height:15px;box-sizing:border-box;border:1.5px solid #dcdcdc;border-radius:3px;background:#fff;"></div>
<div class="t " style="left:208px;top:786px;font-size:13px;line-height:13px;font-weight:700;color:#3070ae;transform:scaleX(0.9322);transform-origin:left top;">Customized Pencil Portrait Sketch| C...</div>
<div style="position:absolute;left:448px;top:786px;width:85px;height:38px;border-radius:4px;background:#1a73e3;"></div>
<svg style="position:absolute;left:459px;top:797px;" width="17" height="17" viewBox="0 0 17 17"><rect x="1" y="0" width="15" height="15.8" rx="2" fill="#fff"/><rect x="4.6" y="5.9" width="1.2" height="5.2" fill="#2c3a50"/><rect x="7.5" y="3.8" width="1.2" height="7.3" fill="#2c3a50"/><rect x="10.8" y="8.4" width="1.2" height="2.7" fill="#2c3a50"/></svg>
<div class="t " style="left:484px;top:796px;font-size:14px;line-height:14px;font-weight:400;color:#ffffff;transform:scaleX(0.9850);transform-origin:left top;">Report</div>
<div style="position:absolute;left:545px;top:786px;width:37px;height:38px;border-radius:4px;background:#e5e5e6;"></div>
<svg style="position:absolute;left:556px;top:797px;" width="15" height="16" viewBox="0 0 15 16"><path d="M2.3,9 A5.2,5.2 0 1 0 7.8,3.8" fill="none" stroke="#262626" stroke-width="1.35"/><path d="M5.4,3.7 L8.4,1.3 L8.4,6.1 Z" fill="#262626"/></svg>
<div class="t " style="left:630px;top:798px;font-size:13px;line-height:13px;font-weight:400;color:#2a2a2a;transform:scaleX(1.0300);transform-origin:left top;">28/30</div>
<div class="t " style="left:728px;top:799px;font-size:12px;line-height:12px;font-weight:400;color:#a7bd7a;transform:scaleX(0.9800);transform-origin:left top;">59%</div>
<svg style="position:absolute;left:728px;top:812px;" width="25" height="1" viewBox="0 0 25 1"><rect x="0.00" y="0" width="3.1" height="1.1" fill="#1c1c1c"/><rect x="5.27" y="0" width="3.1" height="1.1" fill="#1c1c1c"/><rect x="10.54" y="0" width="3.1" height="1.1" fill="#1c1c1c"/><rect x="15.81" y="0" width="3.1" height="1.1" fill="#1c1c1c"/><rect x="21.08" y="0" width="3.1" height="1.1" fill="#1c1c1c"/></svg>
<div class="t " style="left:757.5px;top:799px;font-size:12px;line-height:12px;font-weight:400;color:#3a3a3a;">/</div>
<div class="t " style="left:767.7px;top:799px;font-size:12px;line-height:12px;font-weight:400;color:#7eba6c;transform:scaleX(0.9800);transform-origin:left top;">80%</div>
<svg style="position:absolute;left:767.7px;top:812px;" width="25" height="1" viewBox="0 0 25 1"><rect x="0.00" y="0" width="3.1" height="1.1" fill="#1c1c1c"/><rect x="5.27" y="0" width="3.1" height="1.1" fill="#1c1c1c"/><rect x="10.54" y="0" width="3.1" height="1.1" fill="#1c1c1c"/><rect x="15.81" y="0" width="3.1" height="1.1" fill="#1c1c1c"/><rect x="21.08" y="0" width="3.1" height="1.1" fill="#1c1c1c"/></svg>
<div class="t " style="left:838px;top:799px;font-size:12px;line-height:12px;font-weight:400;color:#a7bd7a;transform:scaleX(0.9800);transform-origin:left top;">59%</div>
<svg style="position:absolute;left:838px;top:812px;" width="25" height="1" viewBox="0 0 25 1"><rect x="0.00" y="0" width="3.1" height="1.1" fill="#1c1c1c"/><rect x="5.27" y="0" width="3.1" height="1.1" fill="#1c1c1c"/><rect x="10.54" y="0" width="3.1" height="1.1" fill="#1c1c1c"/><rect x="15.81" y="0" width="3.1" height="1.1" fill="#1c1c1c"/><rect x="21.08" y="0" width="3.1" height="1.1" fill="#1c1c1c"/></svg>
<div class="t " style="left:867.5px;top:799px;font-size:12px;line-height:12px;font-weight:400;color:#3a3a3a;">/</div>
<div class="t " style="left:877.7px;top:799px;font-size:12px;line-height:12px;font-weight:400;color:#7eba6c;transform:scaleX(0.9800);transform-origin:left top;">80%</div>
<svg style="position:absolute;left:877.7px;top:812px;" width="25" height="1" viewBox="0 0 25 1"><rect x="0.00" y="0" width="3.1" height="1.1" fill="#1c1c1c"/><rect x="5.27" y="0" width="3.1" height="1.1" fill="#1c1c1c"/><rect x="10.54" y="0" width="3.1" height="1.1" fill="#1c1c1c"/><rect x="15.81" y="0" width="3.1" height="1.1" fill="#1c1c1c"/><rect x="21.08" y="0" width="3.1" height="1.1" fill="#1c1c1c"/></svg>
<div class="t " style="left:948px;top:799px;font-size:12px;line-height:12px;font-weight:400;color:#a7bd7a;transform:scaleX(0.9800);transform-origin:left top;">59%</div>
<svg style="position:absolute;left:948px;top:812px;" width="25" height="1" viewBox="0 0 25 1"><rect x="0.00" y="0" width="3.1" height="1.1" fill="#1c1c1c"/><rect x="5.27" y="0" width="3.1" height="1.1" fill="#1c1c1c"/><rect x="10.54" y="0" width="3.1" height="1.1" fill="#1c1c1c"/><rect x="15.81" y="0" width="3.1" height="1.1" fill="#1c1c1c"/><rect x="21.08" y="0" width="3.1" height="1.1" fill="#1c1c1c"/></svg>
<div class="t " style="left:977.5px;top:799px;font-size:12px;line-height:12px;font-weight:400;color:#3a3a3a;">/</div>
<div class="t " style="left:987.7px;top:799px;font-size:12px;line-height:12px;font-weight:400;color:#7eba6c;transform:scaleX(0.9800);transform-origin:left top;">80%</div>
<svg style="position:absolute;left:987.7px;top:812px;" width="25" height="1" viewBox="0 0 25 1"><rect x="0.00" y="0" width="3.1" height="1.1" fill="#1c1c1c"/><rect x="5.27" y="0" width="3.1" height="1.1" fill="#1c1c1c"/><rect x="10.54" y="0" width="3.1" height="1.1" fill="#1c1c1c"/><rect x="15.81" y="0" width="3.1" height="1.1" fill="#1c1c1c"/><rect x="21.08" y="0" width="3.1" height="1.1" fill="#1c1c1c"/></svg>
<div class="t " style="left:1058px;top:799px;font-size:12px;line-height:12px;font-weight:400;color:#a7bd7a;transform:scaleX(0.9800);transform-origin:left top;">59%</div>
<svg style="position:absolute;left:1058px;top:812px;" width="25" height="1" viewBox="0 0 25 1"><rect x="0.00" y="0" width="3.1" height="1.1" fill="#1c1c1c"/><rect x="5.27" y="0" width="3.1" height="1.1" fill="#1c1c1c"/><rect x="10.54" y="0" width="3.1" height="1.1" fill="#1c1c1c"/><rect x="15.81" y="0" width="3.1" height="1.1" fill="#1c1c1c"/><rect x="21.08" y="0" width="3.1" height="1.1" fill="#1c1c1c"/></svg>
<div class="t " style="left:1087.5px;top:799px;font-size:12px;line-height:12px;font-weight:400;color:#3a3a3a;">/</div>
<div class="t " style="left:1097.7px;top:799px;font-size:12px;line-height:12px;font-weight:400;color:#7eba6c;transform:scaleX(0.9800);transform-origin:left top;">80%</div>
<svg style="position:absolute;left:1097.7px;top:812px;" width="25" height="1" viewBox="0 0 25 1"><rect x="0.00" y="0" width="3.1" height="1.1" fill="#1c1c1c"/><rect x="5.27" y="0" width="3.1" height="1.1" fill="#1c1c1c"/><rect x="10.54" y="0" width="3.1" height="1.1" fill="#1c1c1c"/><rect x="15.81" y="0" width="3.1" height="1.1" fill="#1c1c1c"/><rect x="21.08" y="0" width="3.1" height="1.1" fill="#1c1c1c"/></svg>
<div class="t " style="left:1168px;top:799px;font-size:12px;line-height:12px;font-weight:400;color:#a7bd7a;transform:scaleX(0.9800);transform-origin:left top;">59%</div>
<svg style="position:absolute;left:1168px;top:812px;" width="25" height="1" viewBox="0 0 25 1"><rect x="0.00" y="0" width="3.1" height="1.1" fill="#1c1c1c"/><rect x="5.27" y="0" width="3.1" height="1.1" fill="#1c1c1c"/><rect x="10.54" y="0" width="3.1" height="1.1" fill="#1c1c1c"/><rect x="15.81" y="0" width="3.1" height="1.1" fill="#1c1c1c"/><rect x="21.08" y="0" width="3.1" height="1.1" fill="#1c1c1c"/></svg>
<div class="t " style="left:1197.5px;top:799px;font-size:12px;line-height:12px;font-weight:400;color:#3a3a3a;">/</div>
<div class="t " style="left:1207.7px;top:799px;font-size:12px;line-height:12px;font-weight:400;color:#7eba6c;transform:scaleX(0.9800);transform-origin:left top;">80%</div>
<svg style="position:absolute;left:1207.7px;top:812px;" width="25" height="1" viewBox="0 0 25 1"><rect x="0.00" y="0" width="3.1" height="1.1" fill="#1c1c1c"/><rect x="5.27" y="0" width="3.1" height="1.1" fill="#1c1c1c"/><rect x="10.54" y="0" width="3.1" height="1.1" fill="#1c1c1c"/><rect x="15.81" y="0" width="3.1" height="1.1" fill="#1c1c1c"/><rect x="21.08" y="0" width="3.1" height="1.1" fill="#1c1c1c"/></svg>
<div class="t " style="left:1276.7px;top:799px;font-size:12px;line-height:12px;font-weight:400;color:#a7bd7a;transform:scaleX(0.9800);transform-origin:left top;">59%</div>
<svg style="position:absolute;left:1276.7px;top:812px;" width="25" height="1" viewBox="0 0 25 1"><rect x="0.00" y="0" width="3.1" height="1.1" fill="#1c1c1c"/><rect x="5.27" y="0" width="3.1" height="1.1" fill="#1c1c1c"/><rect x="10.54" y="0" width="3.1" height="1.1" fill="#1c1c1c"/><rect x="15.81" y="0" width="3.1" height="1.1" fill="#1c1c1c"/><rect x="21.08" y="0" width="3.1" height="1.1" fill="#1c1c1c"/></svg>
<div class="t " style="left:1306.2px;top:799px;font-size:12px;line-height:12px;font-weight:400;color:#3a3a3a;">/</div>
<div style="position:absolute;left:1322.9px;top:804.6px;width:8.3px;height:1.2px;background:#111;"></div>
<div class="t " style="left:1388px;top:799px;font-size:12px;line-height:12px;font-weight:400;color:#a7bd7a;transform:scaleX(0.9800);transform-origin:left top;">59%</div>
<svg style="position:absolute;left:1388px;top:812px;" width="25" height="1" viewBox="0 0 25 1"><rect x="0.00" y="0" width="3.1" height="1.1" fill="#1c1c1c"/><rect x="5.27" y="0" width="3.1" height="1.1" fill="#1c1c1c"/><rect x="10.54" y="0" width="3.1" height="1.1" fill="#1c1c1c"/><rect x="15.81" y="0" width="3.1" height="1.1" fill="#1c1c1c"/><rect x="21.08" y="0" width="3.1" height="1.1" fill="#1c1c1c"/></svg>
<div class="t " style="left:1417.5px;top:799px;font-size:12px;line-height:12px;font-weight:400;color:#3a3a3a;">/</div>
<div class="t " style="left:1427.7px;top:799px;font-size:12px;line-height:12px;font-weight:400;color:#7eba6c;transform:scaleX(0.9800);transform-origin:left top;">80%</div>
<svg style="position:absolute;left:1427.7px;top:812px;" width="25" height="1" viewBox="0 0 25 1"><rect x="0.00" y="0" width="3.1" height="1.1" fill="#1c1c1c"/><rect x="5.27" y="0" width="3.1" height="1.1" fill="#1c1c1c"/><rect x="10.54" y="0" width="3.1" height="1.1" fill="#1c1c1c"/><rect x="15.81" y="0" width="3.1" height="1.1" fill="#1c1c1c"/><rect x="21.08" y="0" width="3.1" height="1.1" fill="#1c1c1c"/></svg>
<div class="t " style="left:1498px;top:799px;font-size:12px;line-height:12px;font-weight:400;color:#a7bd7a;transform:scaleX(0.9800);transform-origin:left top;">59%</div>
<svg style="position:absolute;left:1498px;top:812px;" width="25" height="1" viewBox="0 0 25 1"><rect x="0.00" y="0" width="3.1" height="1.1" fill="#1c1c1c"/><rect x="5.27" y="0" width="3.1" height="1.1" fill="#1c1c1c"/><rect x="10.54" y="0" width="3.1" height="1.1" fill="#1c1c1c"/><rect x="15.81" y="0" width="3.1" height="1.1" fill="#1c1c1c"/><rect x="21.08" y="0" width="3.1" height="1.1" fill="#1c1c1c"/></svg>
<div class="t " style="left:1527.5px;top:799px;font-size:12px;line-height:12px;font-weight:400;color:#3a3a3a;">/</div>
<div class="t " style="left:1537.7px;top:799px;font-size:12px;line-height:12px;font-weight:400;color:#7eba6c;transform:scaleX(0.9800);transform-origin:left top;">80%</div>
<svg style="position:absolute;left:1537.7px;top:812px;" width="25" height="1" viewBox="0 0 25 1"><rect x="0.00" y="0" width="3.1" height="1.1" fill="#1c1c1c"/><rect x="5.27" y="0" width="3.1" height="1.1" fill="#1c1c1c"/><rect x="10.54" y="0" width="3.1" height="1.1" fill="#1c1c1c"/><rect x="15.81" y="0" width="3.1" height="1.1" fill="#1c1c1c"/><rect x="21.08" y="0" width="3.1" height="1.1" fill="#1c1c1c"/></svg>
<div style="position:absolute;left:183px;top:859px;width:15px;height:15px;box-sizing:border-box;border:1.5px solid #dcdcdc;border-radius:3px;background:#fff;"></div>
<div class="t " style="left:208px;top:848px;font-size:13px;line-height:13px;font-weight:700;color:#3070ae;transform:scaleX(0.9490);transform-origin:left top;">Word Portrait | Custom Word/Name P...</div>
<div style="position:absolute;left:448px;top:848px;width:85px;height:38px;border-radius:4px;background:#1a73e3;"></div>
<svg style="position:absolute;left:459px;top:859px;" width="17" height="17" viewBox="0 0 17 17"><rect x="1" y="0" width="15" height="15.8" rx="2" fill="#fff"/><rect x="4.6" y="5.9" width="1.2" height="5.2" fill="#2c3a50"/><rect x="7.5" y="3.8" width="1.2" height="7.3" fill="#2c3a50"/><rect x="10.8" y="8.4" width="1.2" height="2.7" fill="#2c3a50"/></svg>
<div class="t " style="left:484px;top:858px;font-size:14px;line-height:14px;font-weight:400;color:#ffffff;transform:scaleX(0.9850);transform-origin:left top;">Report</div>
<div style="position:absolute;left:545px;top:848px;width:37px;height:38px;border-radius:4px;background:#e5e5e6;"></div>
<svg style="position:absolute;left:556px;top:859px;" width="15" height="16" viewBox="0 0 15 16"><path d="M2.3,9 A5.2,5.2 0 1 0 7.8,3.8" fill="none" stroke="#262626" stroke-width="1.35"/><path d="M5.4,3.7 L8.4,1.3 L8.4,6.1 Z" fill="#262626"/></svg>
<div class="t " style="left:630px;top:860px;font-size:13px;line-height:13px;font-weight:400;color:#2a2a2a;transform:scaleX(1.0300);transform-origin:left top;">32/32</div>
<div class="t " style="left:728px;top:861px;font-size:12px;line-height:12px;font-weight:400;color:#a7bd7a;transform:scaleX(0.9800);transform-origin:left top;">59%</div>
<svg style="position:absolute;left:728px;top:874px;" width="25" height="1" viewBox="0 0 25 1"><rect x="0.00" y="0" width="3.1" height="1.1" fill="#1c1c1c"/><rect x="5.27" y="0" width="3.1" height="1.1" fill="#1c1c1c"/><rect x="10.54" y="0" width="3.1" height="1.1" fill="#1c1c1c"/><rect x="15.81" y="0" width="3.1" height="1.1" fill="#1c1c1c"/><rect x="21.08" y="0" width="3.1" height="1.1" fill="#1c1c1c"/></svg>
<div class="t " style="left:757.5px;top:861px;font-size:12px;line-height:12px;font-weight:400;color:#3a3a3a;">/</div>
<div class="t " style="left:767.7px;top:861px;font-size:12px;line-height:12px;font-weight:400;color:#7eba6c;transform:scaleX(0.9800);transform-origin:left top;">80%</div>
<svg style="position:absolute;left:767.7px;top:874px;" width="25" height="1" viewBox="0 0 25 1"><rect x="0.00" y="0" width="3.1" height="1.1" fill="#1c1c1c"/><rect x="5.27" y="0" width="3.1" height="1.1" fill="#1c1c1c"/><rect x="10.54" y="0" width="3.1" height="1.1" fill="#1c1c1c"/><rect x="15.81" y="0" width="3.1" height="1.1" fill="#1c1c1c"/><rect x="21.08" y="0" width="3.1" height="1.1" fill="#1c1c1c"/></svg>
<div class="t " style="left:838px;top:861px;font-size:12px;line-height:12px;font-weight:400;color:#a7bd7a;transform:scaleX(0.9800);transform-origin:left top;">59%</div>
<svg style="position:absolute;left:838px;top:874px;" width="25" height="1" viewBox="0 0 25 1"><rect x="0.00" y="0" width="3.1" height="1.1" fill="#1c1c1c"/><rect x="5.27" y="0" width="3.1" height="1.1" fill="#1c1c1c"/><rect x="10.54" y="0" width="3.1" height="1.1" fill="#1c1c1c"/><rect x="15.81" y="0" width="3.1" height="1.1" fill="#1c1c1c"/><rect x="21.08" y="0" width="3.1" height="1.1" fill="#1c1c1c"/></svg>
<div class="t " style="left:867.5px;top:861px;font-size:12px;line-height:12px;font-weight:400;color:#3a3a3a;">/</div>
<div class="t " style="left:877.7px;top:861px;font-size:12px;line-height:12px;font-weight:400;color:#a7bd7a;transform:scaleX(0.9800);transform-origin:left top;">59%</div>
<svg style="position:absolute;left:877.7px;top:874px;" width="25" height="1" viewBox="0 0 25 1"><rect x="0.00" y="0" width="3.1" height="1.1" fill="#1c1c1c"/><rect x="5.27" y="0" width="3.1" height="1.1" fill="#1c1c1c"/><rect x="10.54" y="0" width="3.1" height="1.1" fill="#1c1c1c"/><rect x="15.81" y="0" width="3.1" height="1.1" fill="#1c1c1c"/><rect x="21.08" y="0" width="3.1" height="1.1" fill="#1c1c1c"/></svg>
<div class="t " style="left:948px;top:861px;font-size:12px;line-height:12px;font-weight:400;color:#a7bd7a;transform:scaleX(0.9800);transform-origin:left top;">59%</div>
<svg style="position:absolute;left:948px;top:874px;" width="25" height="1" viewBox="0 0 25 1"><rect x="0.00" y="0" width="3.1" height="1.1" fill="#1c1c1c"/><rect x="5.27" y="0" width="3.1" height="1.1" fill="#1c1c1c"/><rect x="10.54" y="0" width="3.1" height="1.1" fill="#1c1c1c"/><rect x="15.81" y="0" width="3.1" height="1.1" fill="#1c1c1c"/><rect x="21.08" y="0" width="3.1" height="1.1" fill="#1c1c1c"/></svg>
<div class="t " style="left:977.5px;top:861px;font-size:12px;line-height:12px;font-weight:400;color:#3a3a3a;">/</div>
<div class="t " style="left:987.7px;top:861px;font-size:12px;line-height:12px;font-weight:400;color:#7eba6c;transform:scaleX(0.9800);transform-origin:left top;">80%</div>
<svg style="position:absolute;left:987.7px;top:874px;" width="25" height="1" viewBox="0 0 25 1"><rect x="0.00" y="0" width="3.1" height="1.1" fill="#1c1c1c"/><rect x="5.27" y="0" width="3.1" height="1.1" fill="#1c1c1c"/><rect x="10.54" y="0" width="3.1" height="1.1" fill="#1c1c1c"/><rect x="15.81" y="0" width="3.1" height="1.1" fill="#1c1c1c"/><rect x="21.08" y="0" width="3.1" height="1.1" fill="#1c1c1c"/></svg>
<div class="t " style="left:1058px;top:861px;font-size:12px;line-height:12px;font-weight:400;color:#a7bd7a;transform:scaleX(0.9800);transform-origin:left top;">59%</div>
<svg style="position:absolute;left:1058px;top:874px;" width="25" height="1" viewBox="0 0 25 1"><rect x="0.00" y="0" width="3.1" height="1.1" fill="#1c1c1c"/><rect x="5.27" y="0" width="3.1" height="1.1" fill="#1c1c1c"/><rect x="10.54" y="0" width="3.1" height="1.1" fill="#1c1c1c"/><rect x="15.81" y="0" width="3.1" height="1.1" fill="#1c1c1c"/><rect x="21.08" y="0" width="3.1" height="1.1" fill="#1c1c1c"/></svg>
<div class="t " style="left:1087.5px;top:861px;font-size:12px;line-height:12px;font-weight:400;color:#3a3a3a;">/</div>
<div class="t " style="left:1097.7px;top:861px;font-size:12px;line-height:12px;font-weight:400;color:#7eba6c;transform:scaleX(0.9800);transform-origin:left top;">80%</div>
<svg style="position:absolute;left:1097.7px;top:874px;" width="25" height="1" viewBox="0 0 25 1"><rect x="0.00" y="0" width="3.1" height="1.1" fill="#1c1c1c"/><rect x="5.27" y="0" width="3.1" height="1.1" fill="#1c1c1c"/><rect x="10.54" y="0" width="3.1" height="1.1" fill="#1c1c1c"/><rect x="15.81" y="0" width="3.1" height="1.1" fill="#1c1c1c"/><rect x="21.08" y="0" width="3.1" height="1.1" fill="#1c1c1c"/></svg>
<div class="t " style="left:1168px;top:861px;font-size:12px;line-height:12px;font-weight:400;color:#a7bd7a;transform:scaleX(0.9800);transform-origin:left top;">59%</div>
<svg style="position:absolute;left:1168px;top:874px;" width="25" height="1" viewBox="0 0 25 1"><rect x="0.00" y="0" width="3.1" height="1.1" fill="#1c1c1c"/><rect x="5.27" y="0" width="3.1" height="1.1" fill="#1c1c1c"/><rect x="10.54" y="0" width="3.1" height="1.1" fill="#1c1c1c"/><rect x="15.81" y="0" width="3.1" height="1.1" fill="#1c1c1c"/><rect x="21.08" y="0" width="3.1" height="1.1" fill="#1c1c1c"/></svg>
<div class="t " style="left:1197.5px;top:861px;font-size:12px;line-height:12px;font-weight:400;color:#3a3a3a;">/</div>
<div class="t " style="left:1207.7px;top:861px;font-size:12px;line-height:12px;font-weight:400;color:#7eba6c;transform:scaleX(0.9800);transform-origin:left top;">80%</div>
<svg style="position:absolute;left:1207.7px;top:874px;" width="25" height="1" viewBox="0 0 25 1"><rect x="0.00" y="0" width="3.1" height="1.1" fill="#1c1c1c"/><rect x="5.27" y="0" width="3.1" height="1.1" fill="#1c1c1c"/><rect x="10.54" y="0" width="3.1" height="1.1" fill="#1c1c1c"/><rect x="15.81" y="0" width="3.1" height="1.1" fill="#1c1c1c"/><rect x="21.08" y="0" width="3.1" height="1.1" fill="#1c1c1c"/></svg>
<div class="t " style="left:1278px;top:861px;font-size:12px;line-height:12px;font-weight:400;color:#a7bd7a;transform:scaleX(0.9800);transform-origin:left top;">59%</div>
<svg style="position:absolute;left:1278px;top:874px;" width="25" height="1" viewBox="0 0 25 1"><rect x="0.00" y="0" width="3.1" height="1.1" fill="#1c1c1c"/><rect x="5.27" y="0" width="3.1" height="1.1" fill="#1c1c1c"/><rect x="10.54" y="0" width="3.1" height="1.1" fill="#1c1c1c"/><rect x="15.81" y="0" width="3.1" height="1.1" fill="#1c1c1c"/><rect x="21.08" y="0" width="3.1" height="1.1" fill="#1c1c1c"/></svg>
<div class="t " style="left:1307.5px;top:861px;font-size:12px;line-height:12px;font-weight:400;color:#3a3a3a;">/</div>
<div class="t " style="left:1317.7px;top:861px;font-size:12px;line-height:12px;font-weight:400;color:#7eba6c;transform:scaleX(0.9800);transform-origin:left top;">80%</div>
<svg style="position:absolute;left:1317.7px;top:874px;" width="25" height="1" viewBox="0 0 25 1"><rect x="0.00" y="0" width="3.1" height="1.1" fill="#1c1c1c"/><rect x="5.27" y="0" width="3.1" height="1.1" fill="#1c1c1c"/><rect x="10.54" y="0" width="3.1" height="1.1" fill="#1c1c1c"/><rect x="15.81" y="0" width="3.1" height="1.1" fill="#1c1c1c"/><rect x="21.08" y="0" width="3.1" height="1.1" fill="#1c1c1c"/></svg>
<div class="t " style="left:1388px;top:861px;font-size:12px;line-height:12px;font-weight:400;color:#a7bd7a;transform:scaleX(0.9800);transform-origin:left top;">59%</div>
<svg style="position:absolute;left:1388px;top:874px;" width="25" height="1" viewBox="0 0 25 1"><rect x="0.00" y="0" width="3.1" height="1.1" fill="#1c1c1c"/><rect x="5.27" y="0" width="3.1" height="1.1" fill="#1c1c1c"/><rect x="10.54" y="0" width="3.1" height="1.1" fill="#1c1c1c"/><rect x="15.81" y="0" width="3.1" height="1.1" fill="#1c1c1c"/><rect x="21.08" y="0" width="3.1" height="1.1" fill="#1c1c1c"/></svg>
<div class="t " style="left:1417.5px;top:861px;font-size:12px;line-height:12px;font-weight:400;color:#3a3a3a;">/</div>
<div class="t " style="left:1427.7px;top:861px;font-size:12px;line-height:12px;font-weight:400;color:#7eba6c;transform:scaleX(0.9800);transform-origin:left top;">80%</div>
<svg style="position:absolute;left:1427.7px;top:874px;" width="25" height="1" viewBox="0 0 25 1"><rect x="0.00" y="0" width="3.1" height="1.1" fill="#1c1c1c"/><rect x="5.27" y="0" width="3.1" height="1.1" fill="#1c1c1c"/><rect x="10.54" y="0" width="3.1" height="1.1" fill="#1c1c1c"/><rect x="15.81" y="0" width="3.1" height="1.1" fill="#1c1c1c"/><rect x="21.08" y="0" width="3.1" height="1.1" fill="#1c1c1c"/></svg>
<div class="t " style="left:1498px;top:861px;font-size:12px;line-height:12px;font-weight:400;color:#a7bd7a;transform:scaleX(0.9800);transform-origin:left top;">59%</div>
<svg style="position:absolute;left:1498px;top:874px;" width="25" height="1" viewBox="0 0 25 1"><rect x="0.00" y="0" width="3.1" height="1.1" fill="#1c1c1c"/><rect x="5.27" y="0" width="3.1" height="1.1" fill="#1c1c1c"/><rect x="10.54" y="0" width="3.1" height="1.1" fill="#1c1c1c"/><rect x="15.81" y="0" width="3.1" height="1.1" fill="#1c1c1c"/><rect x="21.08" y="0" width="3.1" height="1.1" fill="#1c1c1c"/></svg>
<div class="t " style="left:1527.5px;top:861px;font-size:12px;line-height:12px;font-weight:400;color:#3a3a3a;">/</div>
<div class="t " style="left:1537.7px;top:861px;font-size:12px;line-height:12px;font-weight:400;color:#7eba6c;transform:scaleX(0.9800);transform-origin:left top;">80%</div>
<svg style="position:absolute;left:1537.7px;top:874px;" width="25" height="1" viewBox="0 0 25 1"><rect x="0.00" y="0" width="3.1" height="1.1" fill="#1c1c1c"/><rect x="5.27" y="0" width="3.1" height="1.1" fill="#1c1c1c"/><rect x="10.54" y="0" width="3.1" height="1.1" fill="#1c1c1c"/><rect x="15.81" y="0" width="3.1" height="1.1" fill="#1c1c1c"/><rect x="21.08" y="0" width="3.1" height="1.1" fill="#1c1c1c"/></svg>
</div>
<div style="position:absolute;left:176px;top:712px;width:1320px;height:1px;background:#dedede;"></div>
<div style="position:absolute;left:176px;top:774px;width:1320px;height:1px;background:#e2e2e2;"></div>
<div style="position:absolute;left:176px;top:836px;width:1320px;height:1px;background:#e2e2e2;"></div>
<div style="position:absolute;left:702px;top:649px;width:6px;height:250px;background:linear-gradient(90deg,#e6e6e6,rgba(255,255,255,0));"></div>
<div class="t " style="left:358px;top:808px;font-size:13px;line-height:13px;font-weight:400;color:#3a3a3a;transform:scaleX(1.0100);transform-origin:left top;">products/pr...</div>
<div class="t " style="left:358px;top:870px;font-size:13px;line-height:13px;font-weight:400;color:#3a3a3a;">products/na...</div>
<svg style="position:absolute;left:0px;top:0px;" width="1" height="1" viewBox="0 0 1 1"><rect x="213.94" y="746.00" width="5.17" height="5.2" fill="#f2cf96"/><rect x="213.94" y="751.00" width="5.17" height="5.2" fill="#f2cf96"/><rect x="218.81" y="746.00" width="5.17" height="5.2" fill="#8f4c2a"/><rect x="218.81" y="751.00" width="5.17" height="5.2" fill="#8f4c2a"/><rect x="223.68" y="756.00" width="5.17" height="5.2" fill="#e4f5fc"/><rect x="233.41" y="751.00" width="4.36" height="5.2" fill="#7aa2ca"/><rect x="237.47" y="756.00" width="5.98" height="5.2" fill="#a86a48"/><rect x="243.15" y="756.00" width="5.17" height="5.2" fill="#90c0e8"/><rect x="243.15" y="751.00" width="5.17" height="5.2" fill="#f4d8a0"/><rect x="248.02" y="746.00" width="4.36" height="5.2" fill="#f4dcae"/><rect x="248.02" y="751.00" width="4.36" height="5.2" fill="#f4d8a8"/><rect x="252.07" y="751.00" width="5.17" height="5.2" fill="#c8a070"/><rect x="256.94" y="751.00" width="5.17" height="5.2" fill="#d8f0f8"/><rect x="266.68" y="751.00" width="5.98" height="5.2" fill="#88c0e8"/><rect x="277.22" y="751.00" width="5.17" height="5.2" fill="#80a8d0"/><rect x="282.09" y="746.00" width="5.17" height="5.2" fill="#e4f4fb"/><rect x="291.01" y="751.00" width="5.17" height="5.2" fill="#1c1c30"/><rect x="295.88" y="751.00" width="5.17" height="5.2" fill="#2a4a90"/><rect x="300.75" y="751.00" width="5.17" height="5.2" fill="#a8d8f0"/><rect x="311.30" y="751.00" width="9.22" height="5.2" fill="#26262f"/><rect x="329.96" y="751.00" width="10.04" height="5.2" fill="#2850a0"/><rect x="344.56" y="751.00" width="5.17" height="5.2" fill="#f0e0b0"/></svg>
<svg style="position:absolute;left:0px;top:0px;" width="1" height="1" viewBox="0 0 1 1"><rect x="209.07" y="809.00" width="5.17" height="5.2" fill="#6a5048"/><rect x="213.94" y="809.00" width="10.04" height="5.2" fill="#2a2535"/><rect x="223.68" y="809.00" width="5.17" height="5.2" fill="#8a7050"/><rect x="234.22" y="809.00" width="4.36" height="5.2" fill="#7ab0d8"/><rect x="248.83" y="809.00" width="5.17" height="5.2" fill="#1a1a2a"/><rect x="253.70" y="809.00" width="5.17" height="5.2" fill="#e8c8a0"/><rect x="263.43" y="809.00" width="5.17" height="5.2" fill="#1a1a2a"/><rect x="268.30" y="809.00" width="5.17" height="5.2" fill="#6ab0e8"/><rect x="278.85" y="809.00" width="5.17" height="5.2" fill="#8aaad8"/><rect x="283.71" y="809.00" width="5.17" height="5.2" fill="#2a2a3a"/><rect x="288.58" y="809.00" width="5.17" height="5.2" fill="#5a3a30"/><rect x="293.45" y="809.00" width="5.17" height="5.2" fill="#2a2a3a"/><rect x="298.32" y="809.00" width="5.17" height="5.2" fill="#3a4a80"/><rect x="303.18" y="809.00" width="5.17" height="5.2" fill="#d8b090"/><rect x="312.92" y="809.00" width="5.17" height="5.2" fill="#6a90c8"/><rect x="317.79" y="809.00" width="5.17" height="5.2" fill="#1a1a2a"/><rect x="328.33" y="809.00" width="5.17" height="5.2" fill="#1a1a2a"/><rect x="343.75" y="809.00" width="10.04" height="5.2" fill="#2a2a3a"/><rect x="213.94" y="814.00" width="5.17" height="5.2" fill="#f0d0a0"/><rect x="218.81" y="814.00" width="5.17" height="5.2" fill="#8a4a30"/><rect x="223.68" y="814.00" width="5.17" height="5.2" fill="#90c8e8"/><rect x="234.22" y="814.00" width="4.36" height="5.2" fill="#6a3a30"/><rect x="243.96" y="814.00" width="5.17" height="5.2" fill="#8a3a70"/><rect x="248.83" y="814.00" width="5.17" height="5.2" fill="#f0d8b0"/><rect x="253.70" y="814.00" width="5.17" height="5.2" fill="#2850a0"/><rect x="258.56" y="814.00" width="5.17" height="5.2" fill="#d8f0f8"/><rect x="263.43" y="814.00" width="5.17" height="5.2" fill="#f0e0c0"/><rect x="268.30" y="814.00" width="5.17" height="5.2" fill="#2850a0"/><rect x="278.85" y="814.00" width="5.17" height="5.2" fill="#8a5a40"/><rect x="283.71" y="814.00" width="5.17" height="5.2" fill="#2850a0"/><rect x="298.32" y="814.00" width="5.17" height="5.2" fill="#2850a0"/><rect x="303.18" y="814.00" width="5.17" height="5.2" fill="#a8d8f0"/><rect x="312.92" y="814.00" width="5.17" height="5.2" fill="#d8b090"/><rect x="322.66" y="814.00" width="5.17" height="5.2" fill="#d0c8e0"/><rect x="333.20" y="814.00" width="5.17" height="5.2" fill="#8a4a30"/><rect x="338.07" y="814.00" width="5.17" height="5.2" fill="#6ab0e8"/><rect x="348.62" y="814.00" width="5.17" height="5.2" fill="#f0d8b0"/><rect x="353.48" y="814.00" width="5.17" height="5.2" fill="#e0f0f0"/></svg>
<svg style="position:absolute;left:0px;top:0px;" width="1" height="1" viewBox="0 0 1 1"><rect x="250.45" y="869.90" width="4.36" height="5.2" fill="#d8b890"/><rect x="260.19" y="869.90" width="4.36" height="5.2" fill="#f0d8b0"/><rect x="283.71" y="869.90" width="5.17" height="5.2" fill="#6ab0e8"/><rect x="210.70" y="874.50" width="5.17" height="5.2" fill="#8a5a40"/><rect x="225.30" y="874.50" width="5.17" height="5.2" fill="#f0c890"/><rect x="230.17" y="874.50" width="5.17" height="5.2" fill="#7ab0d8"/><rect x="239.90" y="874.50" width="10.04" height="5.2" fill="#f0c890"/><rect x="250.45" y="874.50" width="5.17" height="5.2" fill="#4a3a80"/><rect x="255.32" y="874.50" width="5.17" height="5.2" fill="#a8d8f0"/><rect x="260.19" y="874.50" width="5.17" height="5.2" fill="#f0d8a8"/><rect x="265.05" y="874.50" width="5.17" height="5.2" fill="#5a3a40"/><rect x="274.79" y="874.50" width="5.17" height="5.2" fill="#a86a40"/><rect x="279.66" y="874.50" width="5.17" height="5.2" fill="#a8d8f0"/><rect x="288.58" y="874.50" width="5.17" height="5.2" fill="#f0e0c0"/><rect x="294.26" y="874.50" width="5.17" height="5.2" fill="#4a3a90"/><rect x="304.81" y="874.50" width="5.17" height="5.2" fill="#f0e0c0"/><rect x="309.67" y="874.50" width="5.17" height="5.2" fill="#2a4a90"/><rect x="319.41" y="874.50" width="5.17" height="5.2" fill="#d8a070"/><rect x="333.20" y="874.50" width="5.17" height="5.2" fill="#7ab0d8"/><rect x="343.75" y="874.50" width="5.17" height="5.2" fill="#c88a50"/><rect x="348.62" y="874.50" width="5.17" height="5.2" fill="#3a3a90"/><rect x="353.48" y="874.50" width="5.17" height="5.2" fill="#6ab0e8"/><rect x="210.70" y="879.00" width="5.17" height="5.2" fill="#d8a070"/><rect x="215.56" y="879.00" width="5.17" height="5.2" fill="#1a1a2a"/><rect x="220.43" y="879.00" width="5.17" height="5.2" fill="#2850a0"/><rect x="225.30" y="879.00" width="5.17" height="5.2" fill="#1a1a2a"/><rect x="230.17" y="879.00" width="5.17" height="5.2" fill="#6a4a40"/><rect x="235.04" y="879.00" width="5.17" height="5.2" fill="#f0d0a0"/><rect x="250.45" y="879.00" width="5.17" height="5.2" fill="#3a2a70"/><rect x="255.32" y="879.00" width="5.17" height="5.2" fill="#1a1a2a"/><rect x="265.05" y="879.00" width="5.17" height="5.2" fill="#5a80c0"/><rect x="269.92" y="879.00" width="5.17" height="5.2" fill="#1a1a2a"/><rect x="274.79" y="879.00" width="5.17" height="5.2" fill="#f0e0c0"/><rect x="294.26" y="879.00" width="5.17" height="5.2" fill="#4a3a90"/><rect x="309.67" y="879.00" width="5.17" height="5.2" fill="#a88060"/><rect x="319.41" y="879.00" width="5.17" height="5.2" fill="#2a2a40"/><rect x="324.28" y="879.00" width="5.17" height="5.2" fill="#a8d8f0"/><rect x="329.15" y="879.00" width="5.17" height="5.2" fill="#1a1a2a"/><rect x="334.01" y="879.00" width="5.17" height="5.2" fill="#8a5040"/><rect x="343.75" y="879.00" width="5.17" height="5.2" fill="#f0c080"/><rect x="348.62" y="879.00" width="5.17" height="5.2" fill="#3a2a80"/></svg>
<div style="position:absolute;left:-60px;top:785px;width:124px;height:56px;border-radius:28px;background:#1a73e3;box-shadow:0 2px 8px rgba(0,0,0,0.18);"></div>
<div class="t " style="right:1619.5px;top:804.5px;font-size:16px;line-height:16px;font-weight:700;color:#ffffff;transform:scaleX(0.9100);transform-origin:right top;">Need help?</div></body></html>
